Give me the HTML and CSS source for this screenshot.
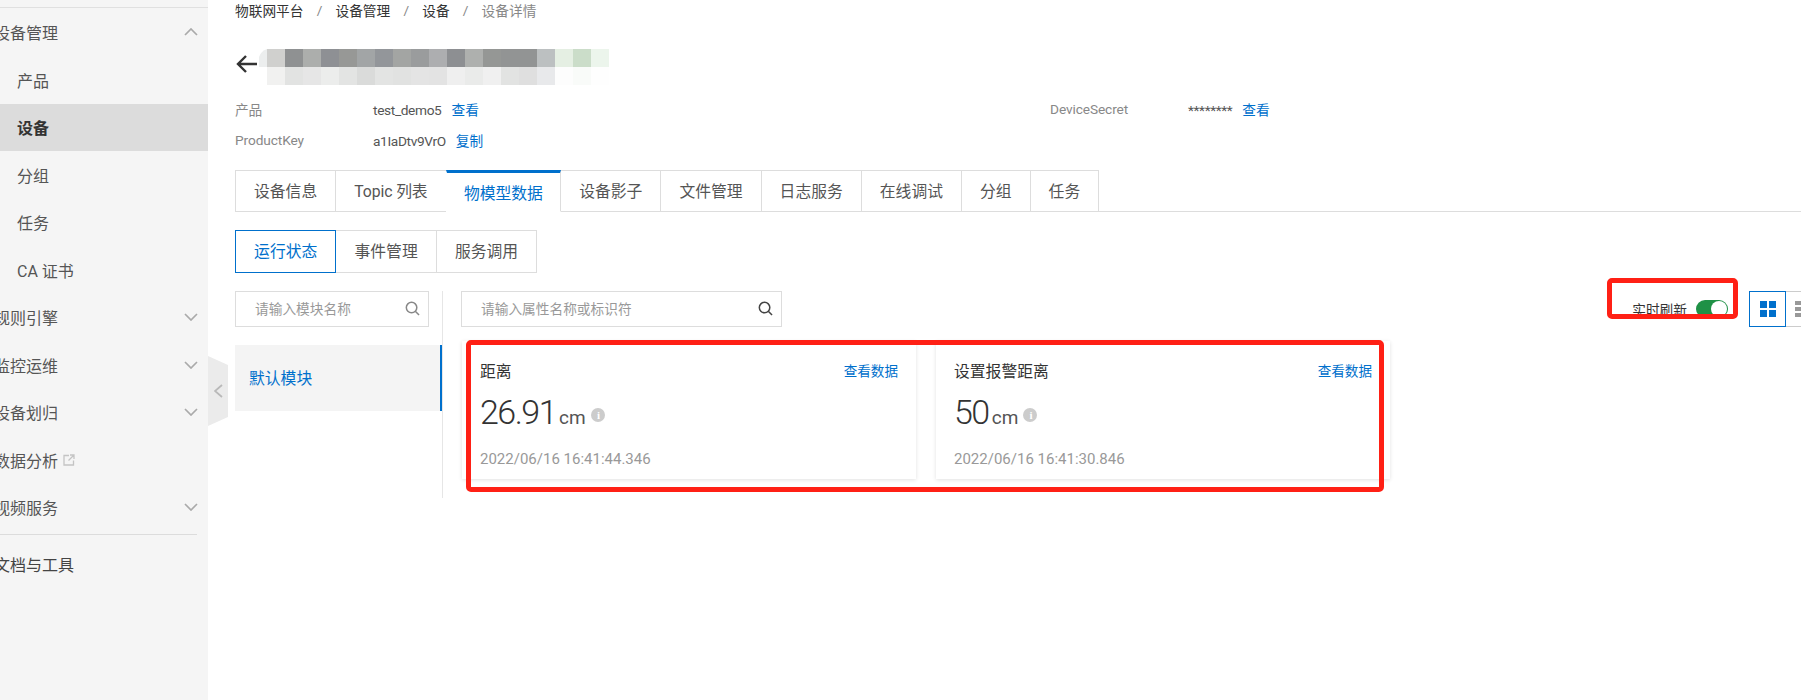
FILE: index.html
```html
<!DOCTYPE html>
<html lang="zh-CN">
<head>
  <meta charset="UTF-8">
  <title>设备详情</title>
  <link rel="stylesheet" href="styles.css">
</head>
<body>

<aside class="sidebar">
  <ul class="nav">
    <li class="nav-group">设备管理
      <svg class="chevron" viewBox="0 0 14 8"><polyline points="1,7 7,1 13,7"/></svg>
    </li>
    <li class="nav-sub">产品</li>
    <li class="nav-sub active">设备</li>
    <li class="nav-sub">分组</li>
    <li class="nav-sub">任务</li>
    <li class="nav-sub">CA 证书</li>
    <li class="nav-group">规则引擎
      <svg class="chevron" viewBox="0 0 14 8"><polyline points="1,1 7,7 13,1"/></svg>
    </li>
    <li class="nav-group">监控运维
      <svg class="chevron" viewBox="0 0 14 8"><polyline points="1,1 7,7 13,1"/></svg>
    </li>
    <li class="nav-group">设备划归
      <svg class="chevron" viewBox="0 0 14 8"><polyline points="1,1 7,7 13,1"/></svg>
    </li>
    <li class="nav-group">数据分析
      <svg class="ext-link" viewBox="0 0 12 12"><path d="M6 1.5H1v9.5h9.5V6.5M7 1h4v4M11 1L5.5 6.5"/></svg>
    </li>
    <li class="nav-group">视频服务
      <svg class="chevron" viewBox="0 0 14 8"><polyline points="1,1 7,7 13,1"/></svg>
    </li>
    <li class="nav-group nav-docs">文档与工具</li>
  </ul>
</aside>

<div class="collapse-tab">
  <svg viewBox="0 0 9 14"><polyline points="8,1 1,7 8,13"/></svg>
</div>

<main class="main">
  <div class="breadcrumb">
    <span>物联网平台</span><i>/</i>
    <span>设备管理</span><i>/</i>
    <span>设备</span><i>/</i>
    <span class="current">设备详情</span>
  </div>

  <div class="title-row">
    <svg class="back" viewBox="0 0 22 18"><path d="M21 9H2M10 1L2 9l8 8"/></svg>
    <!-- device name is pixelated in the original -->
    <svg class="mosaic" width="350" height="36" viewBox="0 0 350 36">
      <path d="M0 18V8Q2 2 8 0V18Z" fill="#eceeee"/>
      <g>
        <rect x="8" width="18" height="18" fill="#d0d0ce"/>
        <rect x="26" width="18" height="18" fill="#8f9192"/>
        <rect x="44" width="18" height="18" fill="#acaeac"/>
        <rect x="62" width="18" height="18" fill="#8e9094"/>
        <rect x="80" width="18" height="18" fill="#979896"/>
        <rect x="98" width="18" height="18" fill="#a2a5a6"/>
        <rect x="116" width="18" height="18" fill="#93969a"/>
        <rect x="134" width="18" height="18" fill="#a3a5a3"/>
        <rect x="152" width="18" height="18" fill="#9a9c9d"/>
        <rect x="170" width="18" height="18" fill="#adaeb0"/>
        <rect x="188" width="18" height="18" fill="#8d8f92"/>
        <rect x="206" width="18" height="18" fill="#aeb0ae"/>
        <rect x="224" width="18" height="18" fill="#959795"/>
        <rect x="242" width="18" height="18" fill="#929494"/>
        <rect x="260" width="18" height="18" fill="#929494"/>
        <rect x="278" width="18" height="18" fill="#bcc0c1"/>
        <rect x="296" width="18" height="18" fill="#e5efe3"/>
        <rect x="314" width="18" height="18" fill="#cbddc9"/>
        <rect x="332" width="18" height="18" fill="#ecf5ec"/>
      </g>
      <g>
        <rect x="8" y="18" width="18" height="18" fill="#f1f1f0"/>
        <rect x="26" y="18" width="18" height="18" fill="#e2e3e2"/>
        <rect x="44" y="18" width="18" height="18" fill="#e6e6e6"/>
        <rect x="62" y="18" width="18" height="18" fill="#ecedec"/>
        <rect x="80" y="18" width="18" height="18" fill="#e3e4e3"/>
        <rect x="98" y="18" width="18" height="18" fill="#dadbda"/>
        <rect x="116" y="18" width="18" height="18" fill="#e3e4e3"/>
        <rect x="134" y="18" width="18" height="18" fill="#e1e2e1"/>
        <rect x="152" y="18" width="18" height="18" fill="#e4e4e4"/>
        <rect x="170" y="18" width="18" height="18" fill="#e3e3e3"/>
        <rect x="188" y="18" width="18" height="18" fill="#efefef"/>
        <rect x="206" y="18" width="18" height="18" fill="#eaebea"/>
        <rect x="224" y="18" width="18" height="18" fill="#f0f0f0"/>
        <rect x="242" y="18" width="18" height="18" fill="#e2e3e2"/>
        <rect x="260" y="18" width="18" height="18" fill="#dfdfdf"/>
        <rect x="278" y="18" width="18" height="18" fill="#e8e9eb"/>
        <rect x="296" y="18" width="18" height="18" fill="#fdfdfd"/>
        <rect x="314" y="18" width="18" height="18" fill="#f9fbf9"/>
        <rect x="332" y="18" width="18" height="18" fill="#fefefe"/>
      </g>
    </svg>
  </div>

  <div class="info">
    <span class="info-label">产品</span>
    <span class="info-value">test_demo5<a>查看</a></span>
    <span class="info-label">DeviceSecret</span>
    <span class="info-value">********<a>查看</a></span>
    <span class="info-label">ProductKey</span>
    <span class="info-value">a1IaDtv9VrO<a>复制</a></span>
  </div>

  <div class="tabs">
    <div class="tab">设备信息</div>
    <div class="tab tab-latin">Topic 列表</div>
    <div class="tab active">物模型数据</div>
    <div class="tab">设备影子</div>
    <div class="tab">文件管理</div>
    <div class="tab">日志服务</div>
    <div class="tab">在线调试</div>
    <div class="tab">分组</div>
    <div class="tab">任务</div>
  </div>

  <div class="subtabs">
    <div class="subtab active">运行状态</div>
    <div class="subtab">事件管理</div>
    <div class="subtab">服务调用</div>
  </div>

  <div class="panel">
    <div class="modules">
      <div class="search search-module">
        <span>请输入模块名称</span>
        <svg viewBox="0 0 16 16"><circle cx="7" cy="7" r="5.6"/><path d="M11 11l4 4"/></svg>
      </div>
      <div class="module-item">默认模块</div>
    </div>

    <div class="content">
      <div class="toolbar">
        <div class="search search-prop">
          <span>请输入属性名称或标识符</span>
          <svg viewBox="0 0 16 16"><circle cx="7" cy="7" r="5.6"/><path d="M11 11l4 4"/></svg>
        </div>
        <div class="refresh">
          <span>实时刷新</span>
          <span class="switch"><b></b></span>
          <div class="mark mark-refresh"></div>
        </div>
        <div class="view-btn active">
          <svg viewBox="0 0 16 16"><path d="M0 0h7v7H0zM9 0h7v7H9zM0 9h7v7H0zM9 9h7v7H9z"/></svg>
        </div>
        <div class="view-btn">
          <svg viewBox="0 0 16 16"><path d="M0 0h16v4H0zM0 6h16v4H0zM0 12h16v4H0z"/></svg>
        </div>
      </div>

      <div class="cards">
        <div class="card">
          <div class="card-head"><span>距离</span><a>查看数据</a></div>
          <div class="card-value">26.91<small>cm</small><i>i</i></div>
          <div class="card-time">2022/06/16 16:41:44.346</div>
        </div>
        <div class="card">
          <div class="card-head"><span>设置报警距离</span><a>查看数据</a></div>
          <div class="card-value">50<small>cm</small><i>i</i></div>
          <div class="card-time">2022/06/16 16:41:30.846</div>
        </div>
        <div class="mark mark-cards"></div>
      </div>
    </div>
  </div>
</main>

</body>
</html>
```

FILE: styles.css
```css
* {
  box-sizing: border-box;
}
html, body {
  height: 100%;
}
body {
  margin: 0;
  display: flex;
  overflow: hidden;
  background: #fff;
  color: #333;
  font-family: Roboto, "Noto Sans CJK SC", sans-serif;
  font-size: 13.7px;
}
a {
  color: #0070cc;
}

/* sidebar */
.sidebar {
  flex: 0 0 208px;
  height: 700px;
  background: #f5f5f5;
  overflow: hidden;
}
.nav {
  list-style: none;
  margin: 7px 0 0;
  padding: 0.5px 0 0;
  border-top: 1px solid #e0e0e0;
  font-size: 16px;
  color: #555;
}
.nav li {
  height: 47.5px;
  display: flex;
  align-items: center;
  position: relative;
}
.nav-group {
  margin-left: -6px;
}
.nav-sub {
  padding-left: 17px;
}
.nav-sub.active {
  background: #dcdcdc;
  color: #333;
  font-weight: 700;
}
.nav .nav-docs {
  margin-top: 3px;
  margin-right: 11px;
  height: 58px;
  border-top: 1px solid #dcdcdc;
  color: #444;
}
.chevron {
  position: absolute;
  left: 190px;
  top: 50%;
  width: 14px;
  height: 8px;
  margin-top: -4px;
  fill: none;
  stroke: #aaa;
  stroke-width: 1.7;
}
.ext-link {
  width: 12px;
  height: 12px;
  margin-left: 5px;
  fill: none;
  stroke: #c4c4c4;
  stroke-width: 1.3;
}
.collapse-tab {
  position: absolute;
  left: 208px;
  top: 356px;
  width: 20px;
  height: 70px;
  background: #ebebeb;
  clip-path: polygon(0 0, 100% 9px, 100% 61px, 0 100%);
  display: flex;
  align-items: center;
  justify-content: center;
}
.collapse-tab svg {
  width: 9px;
  height: 14px;
  fill: none;
  stroke: #b9b9b9;
  stroke-width: 1.8;
}

/* main */
.main {
  flex: 1;
  min-width: 0;
  padding-left: 27px;
  overflow: hidden;
}
.breadcrumb {
  height: 20px;
  display: flex;
  align-items: center;
  color: #333;
}
.breadcrumb i {
  width: 32px;
  text-align: center;
  color: #888;
  font-style: normal;
}
.breadcrumb .current {
  color: #888;
}
.title-row {
  display: flex;
  margin-top: 29px;
  height: 36px;
}
.back {
  width: 22px;
  height: 18px;
  margin: 6px 1px 0 1px;
  fill: none;
  stroke: #333;
  stroke-width: 2.4;
}
.info {
  display: grid;
  grid-template-columns: 138px 677px 138px 1fr;
  grid-auto-rows: 31px;
  margin-top: 8px;
  align-items: center;
}
.info-label {
  color: #888;
  letter-spacing: -0.1px;
}
.info-value {
  color: #555;
  letter-spacing: -0.35px;
}
.info-value a {
  margin-left: 10px;
  letter-spacing: 0;
}

/* tabs */
.tabs {
  display: flex;
  height: 42px;
  margin-top: 15px;
  border-bottom: 1px solid #ddd;
  font-size: 15.8px;
  color: #555;
}
.tab {
  height: 42px;
  padding: 0 18px 2px;
  border: 1px solid #ddd;
  margin-left: -1px;
  display: flex;
  align-items: center;
  background: #fff;
}
.tab:first-child {
  margin-left: 0;
}
.tab-latin {
  letter-spacing: -0.1px;
}
.tab.active {
  position: relative;
  padding: 0 17.3px;
  border-top: 3px solid #0070cc;
  border-bottom-color: #fff;
  border-left-color: #fff;
  color: #0070cc;
}
.subtabs {
  display: flex;
  height: 43px;
  margin-top: 18px;
  font-size: 15.8px;
  color: #555;
}
.subtab {
  padding: 0 18.1px 2px;
  border: 1px solid #ddd;
  margin-left: -1px;
  display: flex;
  align-items: center;
}
.subtab:first-child {
  margin-left: 0;
}
.subtab.active {
  position: relative;
  border-color: #0070cc;
  color: #0070cc;
}

/* panel */
.panel {
  display: flex;
  margin-top: 18px;
}
.modules {
  flex: 0 0 208px;
  height: 207px;
  border-right: 1px solid #e6e6e6;
}
.search {
  height: 36px;
  border: 1px solid #ddd;
  display: flex;
  align-items: center;
  justify-content: space-between;
  padding: 0 8px 2px 19px;
  color: #999;
}
.search svg {
  width: 15px;
  height: 15px;
  fill: none;
  stroke-width: 1.6;
}
.search-module {
  width: 194px;
}
.search-module svg {
  stroke: #888;
}
.search-prop {
  width: 321px;
}
.search-prop svg {
  stroke: #444;
}
.module-item {
  width: 207px;
  height: 66px;
  margin-top: 18px;
  padding: 0 0 2px 14px;
  display: flex;
  align-items: center;
  background: #f4f4f4;
  border-right: 2px solid #0070cc;
  color: #0070cc;
  font-size: 15.8px;
}
.content {
  flex: 1;
  min-width: 0;
  padding-left: 18px;
}
.toolbar {
  display: flex;
  height: 36px;
  margin-right: -19px;
}
.refresh {
  position: relative;
  margin-left: auto;
  margin-right: 22px;
  margin-top: 9px;
  height: 18px;
  display: flex;
  align-items: center;
  gap: 9px;
  color: #333;
}
.switch {
  width: 32px;
  height: 18px;
  border-radius: 9px;
  background: #1f9146;
  display: block;
  padding: 1px;
}
.switch b {
  display: block;
  width: 16px;
  height: 16px;
  margin-left: 14px;
  border-radius: 50%;
  background: #fff;
}
.view-btn {
  width: 37px;
  height: 36px;
  margin-left: -1px;
  border: 1px solid #ccc;
  display: flex;
  align-items: center;
  justify-content: center;
}
.view-btn:last-child {
  width: 35px;
}
.view-btn svg {
  width: 16px;
  height: 16px;
  fill: #999;
}
.view-btn.active {
  position: relative;
  border-color: #0070cc;
}
.view-btn.active svg {
  fill: #0070cc;
}

/* cards */
.cards {
  position: relative;
  display: flex;
  gap: 20px;
  margin: 14px 0 0 1px;
}
.card {
  width: 454px;
  height: 138px;
  padding: 17px 18px 0;
  background: #fff;
  box-shadow: 0 1px 4px rgba(0, 0, 0, 0.12);
}
.card-head {
  display: flex;
  justify-content: space-between;
  align-items: center;
  height: 24px;
  font-size: 15.8px;
}
.card-head a {
  font-size: 13.6px;
}
.card-value {
  display: flex;
  align-items: baseline;
  margin-top: 10px;
  height: 46px;
  font-size: 34px;
  font-weight: 300;
  letter-spacing: -1.5px;
  color: #333;
}
.card-value small {
  margin-left: 3px;
  font-size: 19px;
  letter-spacing: 0;
  color: #555;
  font-weight: 400;
}
.card-value i {
  align-self: center;
  width: 14px;
  height: 14px;
  margin-left: 5px;
  border-radius: 50%;
  background: #ccc;
  color: #fff;
  font: 700 11px/14px "Liberation Serif", serif;
  text-align: center;
}
.card-time {
  margin-top: 12px;
  font-size: 15px;
  color: #999;
}

/* red annotation boxes drawn over the screenshot */
.mark {
  position: absolute;
  border: 5px solid #ff2015;
  border-radius: 5px;
}
.mark-cards {
  left: 4px;
  top: -1px;
  width: 918px;
  height: 152px;
}
.mark-refresh {
  left: -25px;
  top: -22px;
  width: 131px;
  height: 41px;
}
```
